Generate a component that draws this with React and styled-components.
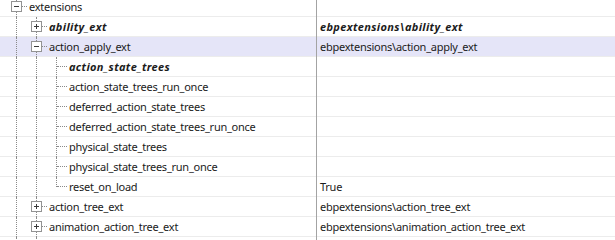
import React from 'react'
import styled, { createGlobalStyle } from 'styled-components'

const rows = [
    { label: 'extensions', level: 0, guides: [], last: false, expander: 'minus' },
    { label: 'ability_ext', value: 'ebpextensions\\ability_ext', guides: [true], expander: 'plus', strong: true },
    { label: 'action_apply_ext', value: 'ebpextensions\\action_apply_ext', guides: [true], expander: 'minus', selected: true },
    { label: 'action_state_trees', guides: [true, true], strong: true },
    { label: 'action_state_trees_run_once', guides: [true, true] },
    { label: 'deferred_action_state_trees', guides: [true, true] },
    { label: 'deferred_action_state_trees_run_once', guides: [true, true] },
    { label: 'physical_state_trees', guides: [true, true] },
    { label: 'physical_state_trees_run_once', guides: [true, true] },
    { label: 'reset_on_load', value: 'True', guides: [true, true], last: true },
    { label: 'action_tree_ext', value: 'ebpextensions\\action_tree_ext', guides: [true], expander: 'plus' },
    { label: 'animation_action_tree_ext', value: 'ebpextensions\\animation_action_tree_ext', guides: [true], expander: 'plus' },
    // next row is scrolled almost out of view, only its guide lines show
    { label: '', value: '', guides: [true], expander: 'plus' },
]

function Expander({ type }) {
    return (
        <Box>
            <Bar />
            {type === 'plus' && <Bar $vertical />}
        </Box>
    )
}

function App() {
    return (
        <>
            <GlobalStyle />
            <Tree>
                {rows.map((row, i) => (
                    <Row key={i} $selected={row.selected}>
                        <NameCell>
                            {row.guides.map((on, j) => (
                                <Guide key={j} $on={on} />
                            ))}
                            <Connector $last={row.last}>
                                {row.expander && <Expander type={row.expander} />}
                            </Connector>
                            <Label $strong={row.strong}>{row.label}</Label>
                        </NameCell>
                        <ValueCell $strong={row.strong}>{row.value}</ValueCell>
                    </Row>
                ))}
            </Tree>
        </>
    )
}

export default App

const GlobalStyle = createGlobalStyle`
    body {
        margin: 0;
        background: #fff;
        overflow: hidden;
        font-family: "Noto Sans", "Open Sans", sans-serif;
        font-size: 11px;
        letter-spacing: -0.25px;
        color: #1b1b1b;
    }
`

const Tree = styled.div`
    margin-top: -3px;
    width: 615px;
`

const Row = styled.div`
    display: grid;
    grid-template-columns: 317px 1fr;
    height: 20px;
    background: ${p => (p.$selected ? '#e5e5f8' : '#fff')};
`

const NameCell = styled.div`
    display: flex;
    align-items: flex-start;
    padding-left: 6px;
    border-right: 1px solid #a3a3a3;
    box-shadow: inset 0 -1px 0 #ececec;
    overflow: hidden;
    white-space: nowrap;
`

const Guide = styled.span`
    flex: none;
    width: 20px;
    height: 20px;
    position: relative;

    &::before {
        content: '';
        display: ${p => (p.$on ? 'block' : 'none')};
        position: absolute;
        left: 10px;
        top: 0;
        bottom: 0;
        border-left: 1px dotted #8a8a8a;
    }
`

const Connector = styled(Guide)`
    &::before {
        display: block;
        bottom: ${p => (p.$last ? '10px' : '0')};
    }

    &::after {
        content: '';
        position: absolute;
        left: 11px;
        width: 10px;
        top: 9px;
        border-top: 1px dotted #8a8a8a;
    }
`

const Box = styled.span`
    position: absolute;
    z-index: 1;
    left: 5px;
    top: 4px;
    width: 11px;
    height: 11px;
    box-sizing: border-box;
    border: 1px solid #939393;
    background: #fff;
`

const Bar = styled.span`
    position: absolute;
    background: #3a3a3a;
    left: ${p => (p.$vertical ? '4px' : '2px')};
    top: ${p => (p.$vertical ? '2px' : '4px')};
    width: ${p => (p.$vertical ? '1px' : '5px')};
    height: ${p => (p.$vertical ? '5px' : '1px')};
`

const Label = styled.span`
    line-height: 20px;
    padding-left: 3px;
    font-weight: ${p => (p.$strong ? 700 : 400)};
    font-style: ${p => (p.$strong ? 'italic' : 'normal')};
    letter-spacing: ${p => (p.$strong ? '0.35px' : 'inherit')};
`

const ValueCell = styled.div`
    line-height: 20px;
    padding-left: 3px;
    box-shadow: inset 0 -1px 0 #ececec;
    white-space: nowrap;
    overflow: hidden;
    font-weight: ${p => (p.$strong ? 700 : 400)};
    font-style: ${p => (p.$strong ? 'italic' : 'normal')};
    letter-spacing: ${p => (p.$strong ? '0.35px' : 'inherit')};
`
